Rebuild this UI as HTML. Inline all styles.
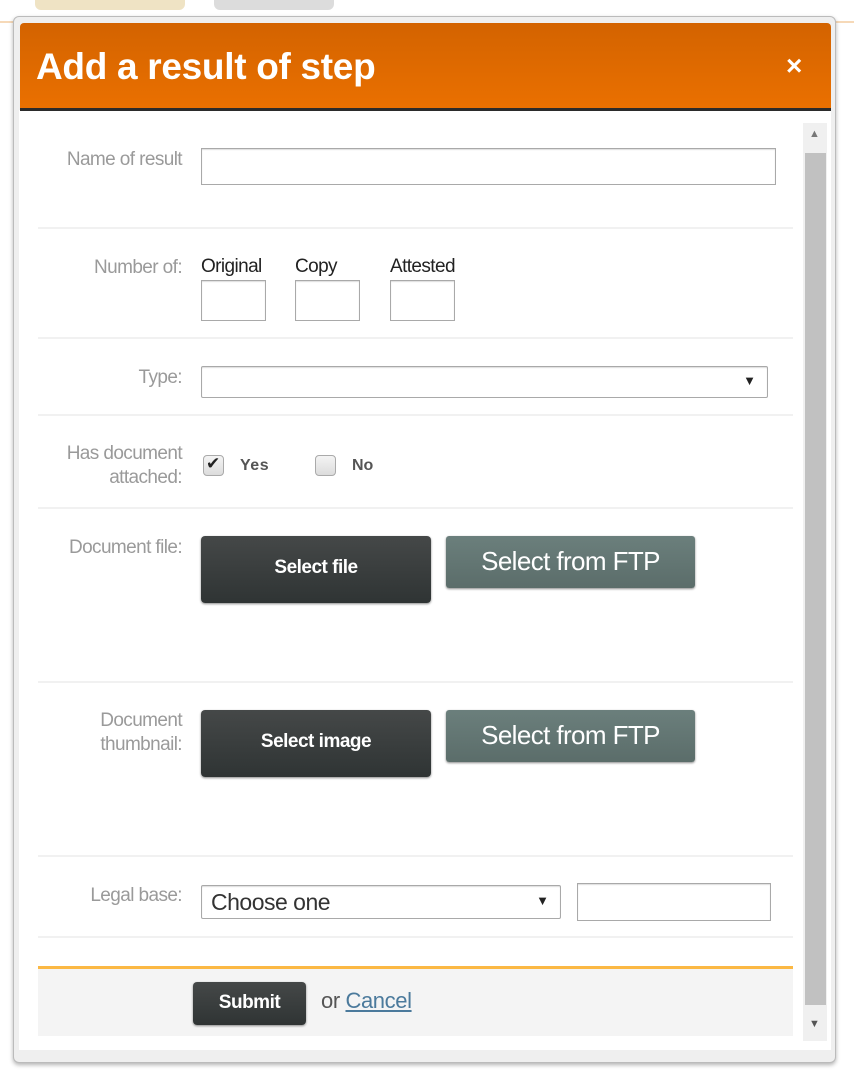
<!DOCTYPE html>
<html><head><meta charset="utf-8"><style>
*{box-sizing:border-box;margin:0;padding:0}
body{width:854px;height:1082px;background:#fff;position:relative;overflow:hidden;font-family:"Liberation Sans",sans-serif}
.a{position:absolute}
.lbl{position:absolute;right:672px;text-align:right;color:#9a9a9a;font-size:19px;letter-spacing:-0.6px;line-height:24px}
.inp{position:absolute;border:1px solid #a9a9a9;background:#fff;box-shadow:inset 0 1px 1px #ddd}
.sep{position:absolute;left:38px;width:755px;height:2px;background:#f1f1f1}
.sm{position:absolute;font-size:19px;color:#222;letter-spacing:-0.6px}
.dark{position:absolute;background:linear-gradient(#454848,#2f3434);border-radius:4px;color:#fff;font-weight:bold;font-size:19px;text-align:center;letter-spacing:-0.5px;box-shadow:0 1px 2px #888}
.ftp{position:absolute;background:linear-gradient(#6b7f7c,#5b6d6a);border-radius:3px;color:#fff;font-size:26px;text-align:center;letter-spacing:-0.6px;box-shadow:0 1px 2px #888}
.cb{position:absolute;width:21px;height:21px;border:1px solid #aaa;border-radius:4px;background:linear-gradient(#f4f4f4,#dcdcdc)}
</style></head><body>
<div class="a" style="left:35px;top:0;width:150px;height:10px;background:#efe3c4;border-radius:0 0 6px 6px"></div>
<div class="a" style="left:214px;top:0;width:120px;height:10px;background:#dcdcdc;border-radius:0 0 6px 6px"></div>
<div class="a" style="left:0;top:21px;width:854px;height:2px;background:#f6d9b8"></div>
<div class="a" style="left:13px;top:16px;width:823px;height:1047px;background:#efefef;border:1px solid #bbb;border-radius:6px;box-shadow:0 2px 4px rgba(0,0,0,.3)"></div>
<div class="a" style="left:19px;top:110px;width:812px;height:940px;background:#fff"></div>
<div class="a" style="left:20px;top:23px;width:811px;height:88px;background:linear-gradient(#d36300,#ea7000);border-radius:4px 4px 0 0;border-bottom:3px solid #2b2b2b"></div>
<div class="a" style="left:36px;top:44px;color:#fff;font-size:37px;font-weight:bold;letter-spacing:-0.3px;line-height:46px">Add a result of step</div>
<div class="a" style="left:786px;top:50px;color:#fff;font-size:28px;font-weight:bold;line-height:32px">×</div>
<div class="a" style="left:803px;top:123px;width:24px;height:918px;background:#f0f0f0"></div>
<div class="a" style="left:805px;top:153px;width:21px;height:852px;background:#c1c1c1"></div>
<div class="a" style="left:809px;top:128px;font-size:11px;color:#777">▲</div>
<div class="a" style="left:809px;top:1018px;font-size:11px;color:#555">▼</div>

<div class="lbl" style="top:148px">Name of result</div>
<div class="inp" style="left:201px;top:148px;width:575px;height:37px"></div>
<div class="sep" style="top:227px"></div>

<div class="lbl" style="top:256px">Number of:</div>
<div class="sm" style="left:201px;top:256px">Original</div>
<div class="sm" style="left:295px;top:256px">Copy</div>
<div class="sm" style="left:390px;top:256px">Attested</div>
<div class="inp" style="left:201px;top:280px;width:65px;height:41px"></div>
<div class="inp" style="left:295px;top:280px;width:65px;height:41px"></div>
<div class="inp" style="left:390px;top:280px;width:65px;height:41px"></div>
<div class="sep" style="top:337px"></div>

<div class="lbl" style="top:366px">Type:</div>
<div class="inp" style="left:201px;top:366px;width:567px;height:32px;border-radius:2px"><span class="a" style="right:11px;top:6px;font-size:13px;color:#222">▼</span></div>
<div class="sep" style="top:414px"></div>

<div class="lbl" style="top:442px">Has document<br>attached:</div>
<div class="cb" style="left:203px;top:455px"><span class="a" style="left:2px;top:-2px;font-size:17px;color:#222">✔</span></div>
<div class="a" style="left:240px;top:457px;font-size:16px;font-weight:bold;color:#555;letter-spacing:0.5px">Yes</div>
<div class="cb" style="left:315px;top:455px"></div>
<div class="a" style="left:352px;top:457px;font-size:16px;font-weight:bold;color:#555">No</div>
<div class="sep" style="top:507px"></div>

<div class="lbl" style="top:536px">Document file:</div>
<div class="dark" style="left:201px;top:536px;width:230px;height:67px;line-height:64px">Select file</div>
<div class="ftp" style="left:446px;top:536px;width:249px;height:52px;line-height:50px">Select from FTP</div>
<div class="sep" style="top:681px"></div>

<div class="lbl" style="top:709px">Document<br>thumbnail:</div>
<div class="dark" style="left:201px;top:710px;width:230px;height:67px;line-height:64px">Select image</div>
<div class="ftp" style="left:446px;top:710px;width:249px;height:52px;line-height:50px">Select from FTP</div>
<div class="sep" style="top:855px"></div>

<div class="lbl" style="top:884px">Legal base:</div>
<div class="inp" style="left:201px;top:885px;width:360px;height:34px;border-radius:2px"><span class="a" style="left:9px;top:3px;font-size:23px;color:#333;letter-spacing:-0.5px">Choose one</span><span class="a" style="right:11px;top:7px;font-size:13px;color:#222">▼</span></div>
<div class="inp" style="left:577px;top:883px;width:194px;height:38px"></div>
<div class="sep" style="top:936px"></div>

<div class="a" style="left:38px;top:966px;width:755px;height:3px;background:#fbb844"></div>
<div class="a" style="left:38px;top:969px;width:755px;height:67px;background:#f4f4f4"></div>
<div class="dark" style="left:193px;top:982px;width:113px;height:43px;line-height:42px;font-size:19px">Submit</div>
<div class="a" style="left:321px;top:988px;font-size:22px;color:#555;letter-spacing:-0.4px">or <span style="color:#4b7a9c;text-decoration:underline">Cancel</span></div>
</body></html>
